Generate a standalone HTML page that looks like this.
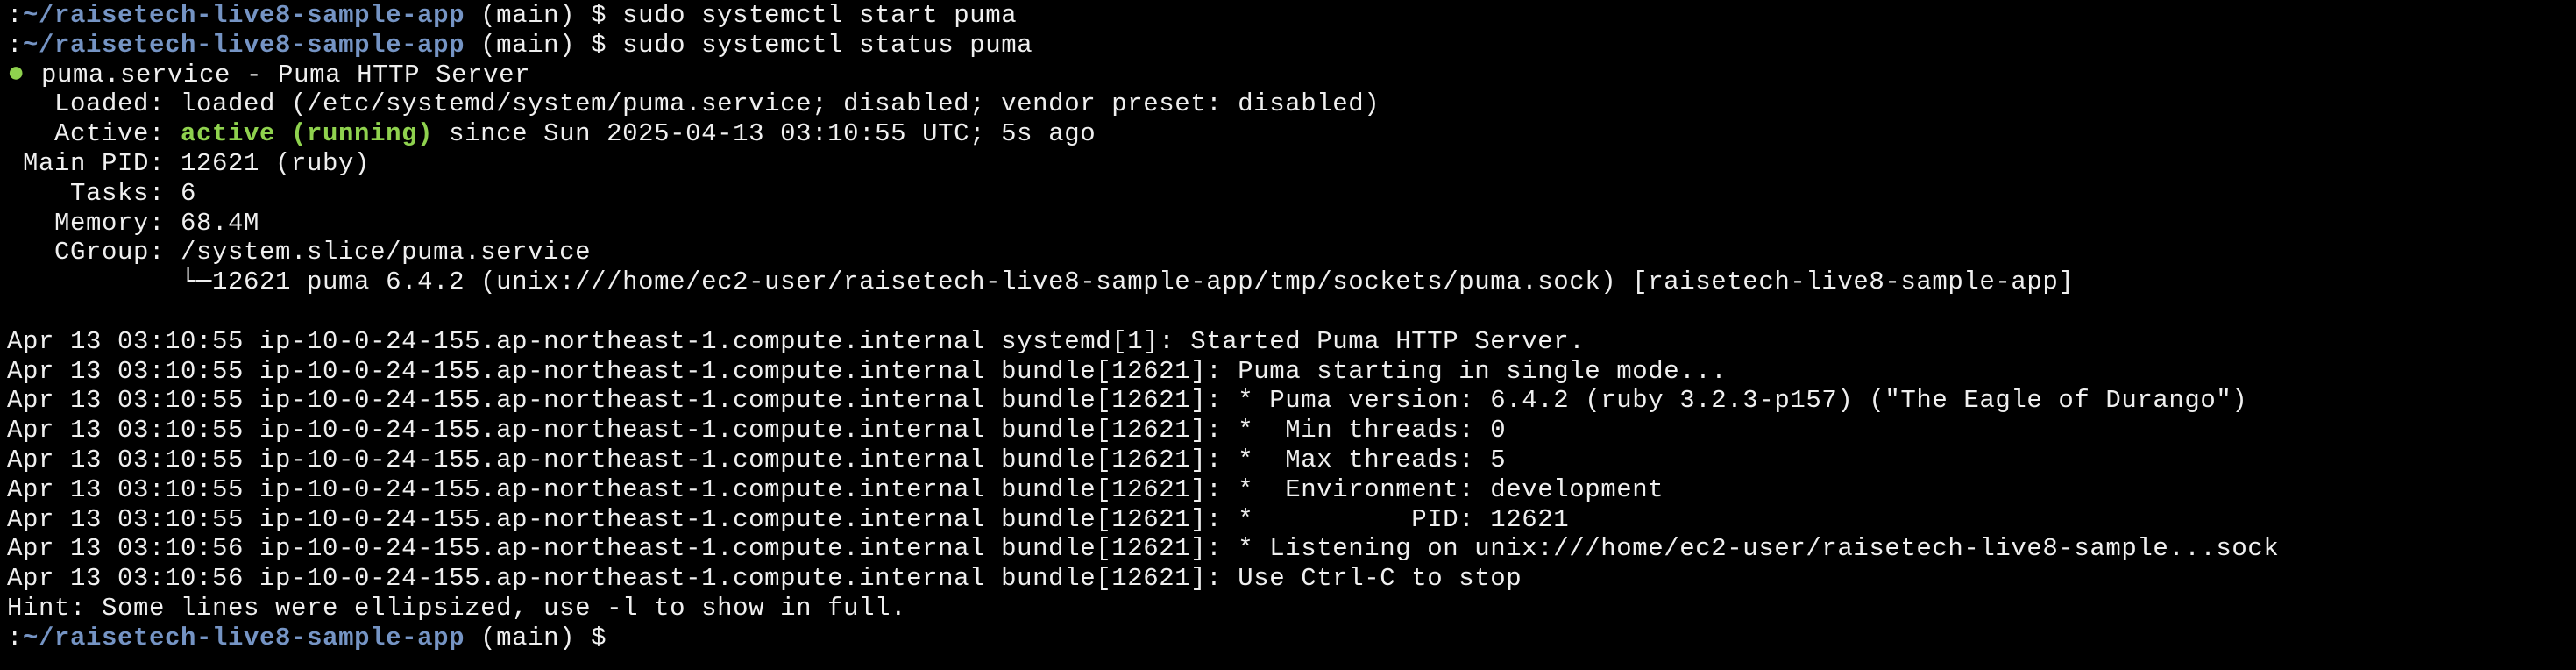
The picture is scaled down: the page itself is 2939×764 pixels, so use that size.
<!DOCTYPE html>
<html><head><meta charset="utf-8">
<style>
html,body{margin:0;padding:0;background:#000;width:2939px;height:764px;overflow:hidden;}
pre{margin:0;position:absolute;left:8px;top:1px;font-family:"Liberation Mono","DejaVu Sans Mono",monospace;font-size:29px;letter-spacing:0.6px;line-height:33.8px;color:#efefef;white-space:pre;}
.b{color:#7594c4;font-weight:bold;}
.g{color:#8fd24e;font-weight:bold;}
.dot{color:#8fd24e;font-size:34px;line-height:0;}
</style></head><body>
<pre>:<span class="b">~/raisetech-live8-sample-app</span> (main) $ sudo systemctl start puma
:<span class="b">~/raisetech-live8-sample-app</span> (main) $ sudo systemctl status puma
<span class="dot">●</span> puma.service - Puma HTTP Server
   Loaded: loaded (/etc/systemd/system/puma.service; disabled; vendor preset: disabled)
   Active: <span class="g">active (running)</span> since Sun 2025-04-13 03:10:55 UTC; 5s ago
 Main PID: 12621 (ruby)
    Tasks: 6
   Memory: 68.4M
   CGroup: /system.slice/puma.service
           └─12621 puma 6.4.2 (unix:///home/ec2-user/raisetech-live8-sample-app/tmp/sockets/puma.sock) [raisetech-live8-sample-app]

Apr 13 03:10:55 ip-10-0-24-155.ap-northeast-1.compute.internal systemd[1]: Started Puma HTTP Server.
Apr 13 03:10:55 ip-10-0-24-155.ap-northeast-1.compute.internal bundle[12621]: Puma starting in single mode...
Apr 13 03:10:55 ip-10-0-24-155.ap-northeast-1.compute.internal bundle[12621]: * Puma version: 6.4.2 (ruby 3.2.3-p157) ("The Eagle of Durango")
Apr 13 03:10:55 ip-10-0-24-155.ap-northeast-1.compute.internal bundle[12621]: *  Min threads: 0
Apr 13 03:10:55 ip-10-0-24-155.ap-northeast-1.compute.internal bundle[12621]: *  Max threads: 5
Apr 13 03:10:55 ip-10-0-24-155.ap-northeast-1.compute.internal bundle[12621]: *  Environment: development
Apr 13 03:10:55 ip-10-0-24-155.ap-northeast-1.compute.internal bundle[12621]: *          PID: 12621
Apr 13 03:10:56 ip-10-0-24-155.ap-northeast-1.compute.internal bundle[12621]: * Listening on unix:///home/ec2-user/raisetech-live8-sample...sock
Apr 13 03:10:56 ip-10-0-24-155.ap-northeast-1.compute.internal bundle[12621]: Use Ctrl-C to stop
Hint: Some lines were ellipsized, use -l to show in full.
:<span class="b">~/raisetech-live8-sample-app</span> (main) $ </pre>
</body></html>
